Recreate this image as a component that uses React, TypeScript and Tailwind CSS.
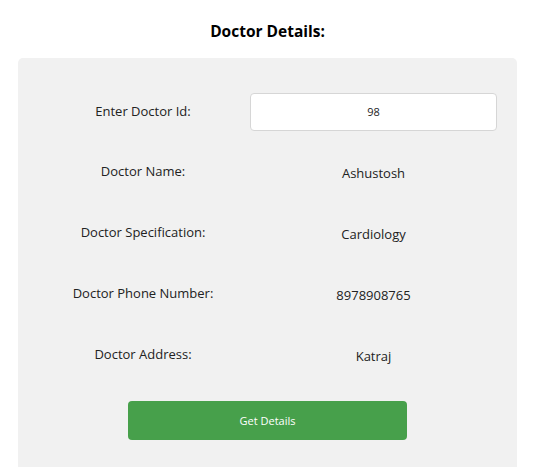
import React from "react";

const rows: [string, string][] = [
  ["Doctor Name:", "Ashustosh"],
  ["Doctor Specification:", "Cardiology"],
  ["Doctor Phone Number:", "8978908765"],
  ["Doctor Address:", "Katraj"],
];

export default function App() {
  return (
    <div
      className="w-[546px] h-[467px] overflow-hidden bg-white text-[#222222]"
      style={{ fontFamily: '"Open Sans", "Noto Sans", sans-serif' }}
    >
      <h1 className="ml-[18px] w-[499px] pt-[20px] h-[58px] text-center text-[15.5px] font-bold text-black">
        Doctor Details:
      </h1>
      <div className="ml-[18px] w-[499px] h-[430px] rounded-[5px] bg-[#f1f1f1] pt-[35px] pl-[20px]">
        <div className="grid grid-cols-[210px_247px] gap-x-[2px] gap-y-[23px]">
          <div className="h-[38px] flex items-center justify-center text-[13px]">
            Enter Doctor Id:
          </div>
          <div className="h-[38px] rounded-[4px] border border-[#d6d6d6] bg-white flex items-center justify-center text-[11px]">
            98
          </div>
          {rows.map(([label, value]) => (
            <React.Fragment key={label}>
              <div className="h-[38px] flex items-center justify-center text-[13px] pb-[3px]">
                {label}
              </div>
              <div className="h-[38px] flex items-center justify-center text-[13px] pt-[2px]">
                {value}
              </div>
            </React.Fragment>
          ))}
        </div>
        <div className="mt-[26px] ml-[90px] w-[279px] h-[39px] rounded-[4px] bg-[#47a04b] flex items-center justify-center text-[11px] text-white pt-[1px]">
          Get Details
        </div>
      </div>
    </div>
  );
}
